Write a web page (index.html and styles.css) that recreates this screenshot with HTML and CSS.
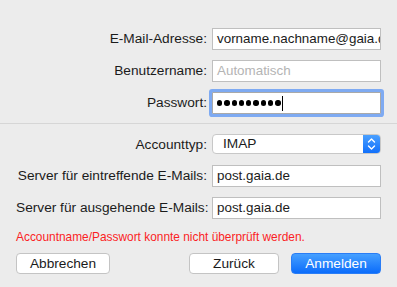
FILE: index.html
```html
<!DOCTYPE html>
<html lang="de">
<head>
  <meta charset="UTF-8" />
  <title>Account hinzufügen</title>
  <link rel="stylesheet" href="styles.css">
</head>
<body>

  <div class="sheet">
    <!-- Login -->
    <div class="form-grid top">
      <label class="label">E-Mail-Adresse:</label>
      <div class="field">vorname.nachname@gaia.de</div>

      <label class="label">Benutzername:</label>
      <div class="field placeholder">Automatisch</div>

      <label class="label">Passwort:</label>
      <div class="field focused">
        <span class="dots"><i></i><i></i><i></i><i></i><i></i><i></i><i></i><i></i><i></i></span><span class="caret"></span>
      </div>
    </div>

    <hr class="separator" />

    <!-- Server -->
    <div class="form-grid bottom">
      <label class="label">Accounttyp:</label>
      <div class="popup">
        <span class="popup-value">IMAP</span>
        <span class="popup-arrows">
          <svg width="9" height="14" viewBox="0 0 9 14">
            <path d="M1.5 5 L4.5 2 L7.5 5" fill="none" stroke="#fff" stroke-width="1.4" stroke-linecap="round" stroke-linejoin="round"/>
            <path d="M1.5 9 L4.5 12 L7.5 9" fill="none" stroke="#fff" stroke-width="1.4" stroke-linecap="round" stroke-linejoin="round"/>
          </svg>
        </span>
      </div>

      <label class="label">Server für eintreffende E-Mails:</label>
      <div class="field">post.gaia.de</div>

      <label class="label">Server für ausgehende E-Mails:</label>
      <div class="field">post.gaia.de</div>
    </div>

    <p class="error">Accountname/Passwort konnte nicht überprüft werden.</p>

    <div class="actions">
      <button type="button" class="btn cancel">Abbrechen</button>
      <button type="button" class="btn back">Zurück</button>
      <button type="button" class="btn primary">Anmelden</button>
    </div>
  </div>

</body>
</html>
```

FILE: styles.css
```css
* {
  box-sizing: border-box;
}

body {
  background-color: #ececec;
  font-family: "Liberation Sans", Arial, sans-serif;
  font-size: 13.7px;
  color: #1b1b1b;
  margin: 0;
  width: 397px;
  height: 287px;
  overflow: hidden;
}

.sheet {
  padding: 28px 16px 0;
}

.form-grid {
  display: grid;
  grid-template-columns: minmax(0, 1fr) 169px;
  column-gap: 5px;
  row-gap: 10px;
  align-items: center;
}

.label {
  text-align: right;
  white-space: nowrap;
  line-height: 16px;
}

.field {
  height: 22px;
  background-color: #fff;
  border: 1px solid #bfbfbf;
  padding: 0 4px;
  font-size: 13.4px;
  line-height: 20px;
  white-space: nowrap;
  overflow: hidden;
  display: flex;
  align-items: center;
}

.field.placeholder {
  color: #b4b4b4;
}

.field.focused {
  border-color: #a9a9a9;
  box-shadow: 0 0 0 3px #7eaaf2;
  border-radius: 1px;
}

.dots {
  display: flex;
  gap: 2px;
}

.dots i {
  width: 5.3px;
  height: 5.3px;
  border-radius: 50%;
  background-color: #000;
}

.caret {
  width: 1px;
  height: 15px;
  background-color: #000;
  margin-left: 1px;
}

.separator {
  border: none;
  border-top: 1px solid #d6d6d6;
  margin: 9px -16px 10px;
}

.popup {
  align-self: start;
  height: 20px;
  margin-bottom: 1px;
  display: flex;
  background-color: #fff;
  border: 1px solid #c8c8c8;
  border-radius: 4px;
  overflow: hidden;
}

.popup-value {
  flex: 1;
  padding-left: 10px;
  line-height: 18px;
}

.popup-arrows {
  width: 17px;
  background: linear-gradient(#4aa0ff, #1170fb);
  display: flex;
  align-items: center;
  justify-content: center;
}

.error {
  color: #fb1e25;
  font-size: 11.9px;
  line-height: 14px;
  margin: 11px 0 9px;
}

.actions {
  display: flex;
  gap: 12px;
}

.btn {
  height: 21px;
  font-family: inherit;
  font-size: 13.7px;
  color: #1b1b1b;
  background-color: #fff;
  border: 1px solid #c4c4c4;
  border-radius: 4px;
  padding: 0;
}

.cancel {
  width: 94px;
}

.back {
  width: 90px;
  margin-left: auto;
}

.primary {
  width: 90px;
  color: #fff;
  border-color: #2a7df5;
  background: linear-gradient(#46a0ff, #0b6cfb);
}
```
